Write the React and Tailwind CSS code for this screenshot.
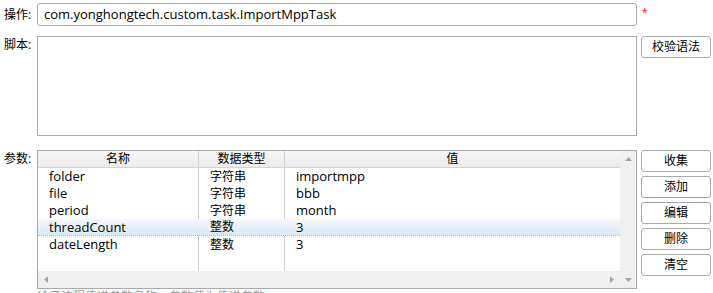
import React from "react";

const params = [
  { name: "folder", type: "字符串", value: "importmpp" },
  { name: "file", type: "字符串", value: "bbb" },
  { name: "period", type: "字符串", value: "month" },
  { name: "threadCount", type: "整数", value: "3", selected: true },
  { name: "dateLength", type: "整数", value: "3" },
];

const buttons = ["收集", "添加", "编辑", "删除", "清空"];

const Arrow = ({ dir }) => {
  const pts = {
    up: "0,4 3.5,0 7,4",
    down: "0,0 3.5,4 7,0",
    left: "4,0 0,3.5 4,7",
    right: "0,0 4,3.5 0,7",
  }[dir];
  const vertical = dir === "up" || dir === "down";
  return (
    <svg width={vertical ? 7 : 4} height={vertical ? 4 : 7} className="block">
      <polygon points={pts} fill="#a6a6a6" />
    </svg>
  );
};

const Btn = ({ children }) => (
  <button className="w-[70px] h-[22px] border border-[#a9a9a9] rounded-[3px] bg-white text-[12px] leading-[20px] text-black">
    {children}
  </button>
);

export default function App() {
  return (
    <div className="w-[713px] h-[293px] overflow-hidden bg-white text-[12px] text-black font-[family-name:'Open_Sans','Noto_Sans_CJK_SC',sans-serif]">
      {/* 操作 */}
      <div className="flex items-center pt-[3px]">
        <div className="w-[37px] pl-[4px] leading-[23px]">操作:</div>
        <div className="w-[600px] h-[23px] border border-[#a9a9a9] rounded-[3px] px-[6px] flex items-center text-[13px]">
          com.yonghongtech.custom.task.ImportMppTask
        </div>
        <span className="self-start ml-[5px] mt-[2px] text-[10px] text-[#ff0000]">*</span>
      </div>

      {/* 脚本 */}
      <div className="flex mt-[10px]">
        <div className="w-[37px] pl-[4px] leading-[16px] pt-[1px]">脚本:</div>
        <div className="w-[600px] h-[100px] border border-[#a9a9a9]"></div>
        <div className="ml-[4px]">
          <Btn>校验语法</Btn>
        </div>
      </div>

      {/* 参数 */}
      <div className="flex mt-[14px]">
        <div className="w-[37px] pl-[4px] leading-[16px] pt-[1px]">参数:</div>
        <div className="w-[600px] h-[139px] border border-[#a9a9a9] flex">
          <div className="flex-1 flex flex-col min-w-0">
            <div className="flex h-[17px] bg-gradient-to-b from-[#f7f7f7] to-[#ececec] border-b border-[#d4d4d4] leading-[16px] text-center">
              <div className="w-[161px] border-r border-[#d0d0d0]">名称</div>
              <div className="w-[86px] border-r border-[#d0d0d0]">数据类型</div>
              <div className="flex-1">值</div>
            </div>
            <div className="flex-1 relative">
              <div className="absolute inset-0 flex pointer-events-none">
                <div className="w-[161px] border-r border-[#d0d0d0]"></div>
                <div className="w-[86px] border-r border-[#d0d0d0]"></div>
              </div>
              <div className="relative">
                {params.map((p) => (
                  <div
                    key={p.name}
                    className={
                      p.selected
                        ? "flex h-[17px] leading-[16px] bg-gradient-to-b from-[#f6f9fd] to-[#d9e8f6] border-b border-dotted border-[#90c4ea]"
                        : "flex h-[17px] leading-[17px]"
                    }
                  >
                    <div className="w-[161px] pl-[11px] text-[13px]">{p.name}</div>
                    <div className="w-[86px] pl-[11px]">{p.type}</div>
                    <div className="flex-1 pl-[11px] text-[13px]">{p.value}</div>
                  </div>
                ))}
              </div>
            </div>
            <div className="h-[17px] bg-[#f0f0f0] flex items-center justify-between px-[6px]">
              <Arrow dir="left" />
              <Arrow dir="right" />
            </div>
          </div>
          <div className="w-[16px] bg-[#f0f0f0] flex flex-col items-center justify-between py-[6px]">
            <Arrow dir="up" />
            <Arrow dir="down" />
          </div>
        </div>
        <div className="ml-[4px] flex flex-col gap-[4px]">
          {buttons.map((b) => (
            <Btn key={b}>{b}</Btn>
          ))}
        </div>
      </div>

      <div className="pl-[37px] mt-[1px] text-[#a0a0a0] leading-[14px]">
        给子流程传递参数名称，参数值为传递参数
      </div>
    </div>
  );
}
